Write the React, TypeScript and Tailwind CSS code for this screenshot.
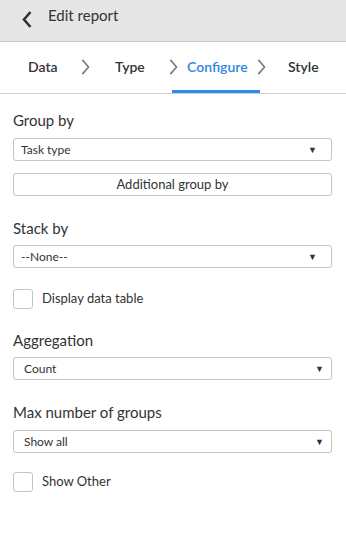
const Chevron = ({ className }: { className: string }) => (
	<svg viewBox="0 0 10 18" className={className} fill="none" stroke="currentColor" strokeWidth={1.8}>
		<polyline points="2,1 9,9 2,17" />
	</svg>
);

const Select = ({ value, inset = false }: { value: string; inset?: boolean }) => (
	<div className="h-[23px] w-full flex items-center justify-between border border-[#c4c4c4] rounded-[3px] bg-white">
		<span className={inset ? "pl-[10px] text-[12px] text-[#333]" : "pl-[7px] text-[12px] text-[#333]"}>
			{value}
		</span>
		<span className={inset ? "pr-[7px] text-[9px] text-[#333]" : "pr-[14px] text-[9px] text-[#333]"}>▼</span>
	</div>
);

const Checkbox = ({ label }: { label: string }) => (
	<div className="flex items-center gap-[9px]">
		<div className="size-[20px] border border-[#c4c4c4] rounded-[3px] bg-white" />
		<span className="text-[13px] text-[#333]">{label}</span>
	</div>
);

const Label = ({ children }: { children: string }) => (
	<div className="text-[15px] text-[#333] leading-[20px]">{children}</div>
);

export default function App() {
	return (
		<div
			className="w-[346px] h-[545px] bg-white flex flex-col"
			style={{ fontFamily: "Lato, 'Noto Sans', sans-serif" }}>
			{/* header */}
			<div className="h-[42px] bg-[#e6e6e6] border-b border-[#c9c9c9] flex items-start pl-[22px] pt-[11px]">
				<svg viewBox="0 0 10 17" className="w-[10px] h-[17px] text-[#333]" fill="none" stroke="currentColor" strokeWidth={2.6}>
					<polyline points="8.5,1 2,8.5 8.5,16" />
				</svg>
				<span className="ml-[16px] -mt-[6px] text-[15px] leading-[20px] text-[#333]">Edit report</span>
			</div>
			{/* steps */}
			<div className="h-[52px] border-b border-[#cfcfcf] flex items-stretch pl-[28px] text-[14px] font-semibold text-[#333]">
				<div className="flex items-center pb-[2px]">
					<span className="w-[28px] whitespace-nowrap">Data</span>
					<Chevron className="ml-[24px] w-[10px] h-[16px] text-[#7a7a7a]" />
					<span className="ml-[25px] w-[28px] whitespace-nowrap">Type</span>
				</div>
				<div className="ml-[29px] w-[88px] flex items-center border-b-[3px] border-[#2b8cf0] pt-[1px]">
					<Chevron className="-ml-[4px] w-[10px] h-[16px] shrink-0 text-[#7a7a7a]" />
					<span className="ml-[9px] w-[58px] whitespace-nowrap text-[#2e86e0]">Configure</span>
					<Chevron className="ml-[11px] w-[10px] h-[16px] shrink-0 text-[#7a7a7a]" />
				</div>
				<div className="flex items-center pb-[2px]">
					<span className="ml-[28px] whitespace-nowrap">Style</span>
				</div>
			</div>
			{/* form */}
			<div className="flex flex-col px-[13px] pr-[14px] pt-[16px]">
				<Label>Group by</Label>
				<div className="mt-[8px]">
					<Select value="Task type" />
				</div>
				<div className="mt-[12px] h-[23px] w-full flex items-center justify-center border border-[#c4c4c4] rounded-[3px] bg-white text-[13px] text-[#333]">
					Additional group by
				</div>
				<div className="mt-[22px]">
					<Label>Stack by</Label>
				</div>
				<div className="mt-[7px]">
					<Select value="--None--" />
				</div>
				<div className="mt-[21px]">
					<Checkbox label="Display data table" />
				</div>
				<div className="mt-[21px]">
					<Label>Aggregation</Label>
				</div>
				<div className="mt-[7px]">
					<Select value="Count" inset />
				</div>
				<div className="mt-[22px]">
					<Label>Max number of groups</Label>
				</div>
				<div className="mt-[8px]">
					<Select value="Show all" inset />
				</div>
				<div className="mt-[19px]">
					<Checkbox label="Show Other" />
				</div>
			</div>
		</div>
	);
}
